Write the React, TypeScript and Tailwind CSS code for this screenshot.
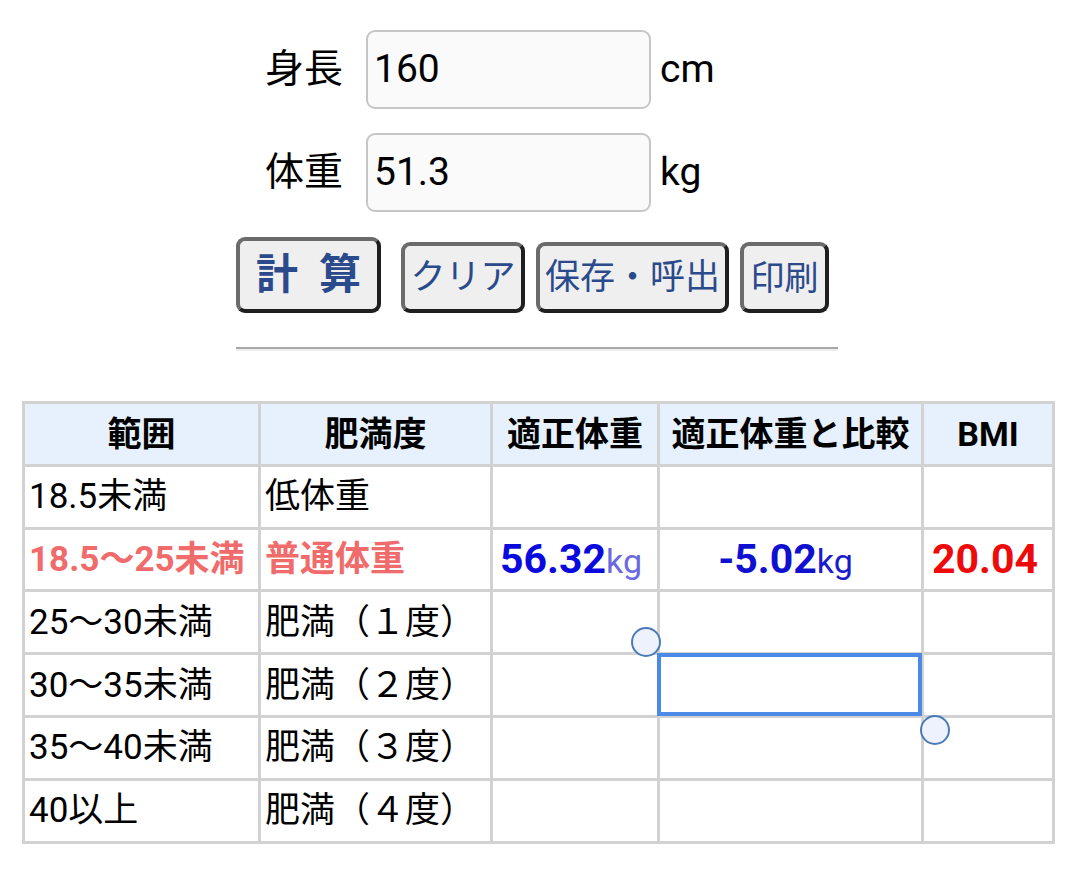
import React from "react";

const font = { fontFamily: "Roboto, 'Noto Sans CJK JP', sans-serif" };

function Btn({ children, className }: { children: React.ReactNode; className: string }) {
  return (
    <button
      className={
        "rounded-[9px] border-[4px] border-t-[#6b6b6b] border-l-[#6b6b6b] border-r-[#1f1f1f] border-b-[#1f1f1f] bg-[#efefef] text-[#2a4a8c] flex items-center justify-center leading-none whitespace-nowrap p-0 " +
        className
      }
    >
      {children}
    </button>
  );
}

const rows = [
  ["18.5未満", "低体重"],
  ["18.5〜25未満", "普通体重"],
  ["25〜30未満", "肥満（１度）"],
  ["30〜35未満", "肥満（２度）"],
  ["35〜40未満", "肥満（３度）"],
  ["40以上", "肥満（４度）"],
];

export default function App() {
  return (
    <div className="w-[1080px] h-[890px] bg-white relative text-black" style={font}>
      <div className="pt-[30px] pl-[265px] flex flex-col gap-[24px]">
        <div className="flex items-center">
          <span className="text-[39px] w-[101px] leading-none">身長</span>
          <div className="w-[285px] h-[79px] rounded-[9px] border-2 border-[#c6c6c6] bg-[#fafafa] flex items-center pl-[6px] text-[39px]">
            160
          </div>
          <span className="text-[39px] ml-[9px]">cm</span>
        </div>
        <div className="flex items-center">
          <span className="text-[39px] w-[101px] leading-none">体重</span>
          <div className="w-[285px] h-[79px] rounded-[9px] border-2 border-[#c6c6c6] bg-[#fafafa] flex items-center pl-[6px] text-[39px]">
            51.3
          </div>
          <span className="text-[39px] ml-[9px]">kg</span>
        </div>
      </div>
      <div className="flex items-end pl-[236px] mt-[25px] h-[76px]">
        <Btn className="w-[145px] h-[76px] text-[42px] font-bold tracking-[21px] pl-[21px]">計算</Btn>
        <Btn className="w-[124px] h-[71px] text-[35px] ml-[20px]">クリア</Btn>
        <Btn className="w-[193px] h-[71px] text-[35px] ml-[11px]">保存・呼出</Btn>
        <Btn className="w-[89px] h-[71px] text-[34px] ml-[11px]">印刷</Btn>
      </div>
      <div className="ml-[236px] mt-[34px] w-[602px] h-[4px] border-t-2 border-t-[#a8a8a8] border-b-2 border-b-[#eeeeee]" />
      <table className="ml-[22px] mt-[50px] border-collapse text-[35px] table-fixed leading-none">
        <colgroup>
          <col className="w-[236px]" />
          <col className="w-[232px]" />
          <col className="w-[167px]" />
          <col className="w-[264px]" />
          <col className="w-[131px]" />
        </colgroup>
        <thead>
          <tr className="bg-[#e6f1fd] h-[62.8px]">
            {["範囲", "肥満度", "適正体重", "適正体重と比較", "BMI"].map((h) => (
              <th key={h} className="border-[3px] border-[#d2d2d2] font-bold text-center p-0 whitespace-nowrap text-[34px]">
                {h}
              </th>
            ))}
          </tr>
        </thead>
        <tbody>
          {rows.map((r, i) => {
            const hi = i === 1;
            const c = hi ? "text-[#f06b6b] font-bold" : "";
            return (
              <tr key={i} className="h-[62.8px]">
                <td className={"border-[3px] border-[#d2d2d2] pl-[4px] p-0 whitespace-nowrap overflow-hidden " + c}>{r[0]}</td>
                <td className={"border-[3px] border-[#d2d2d2] pl-[4px] p-0 whitespace-nowrap overflow-hidden " + c}>{r[1]}</td>
                <td className="border-[3px] border-[#d2d2d2] text-center p-0 pr-[8px] whitespace-nowrap">
                  {hi && (
                    <>
                      <span className="text-[#0a0adf] font-bold text-[41px]">56.32</span>
                      <span className="text-[#6a6ae0] text-[34px]">kg</span>
                    </>
                  )}
                </td>
                <td className="border-[3px] border-[#d2d2d2] text-center p-0 pr-[10px] whitespace-nowrap">
                  {hi && (
                    <>
                      <span className="text-[#1010d0] font-bold text-[41px]">-5.02</span>
                      <span className="text-[#1a1ad0] text-[34px]">kg</span>
                    </>
                  )}
                </td>
                <td className="border-[3px] border-[#d2d2d2] text-center p-0 pr-[6px] whitespace-nowrap">
                  {hi && <span className="text-[#ee0a0a] font-bold text-[41px]">20.04</span>}
                </td>
              </tr>
            );
          })}
        </tbody>
      </table>
      <div className="absolute left-[657px] top-[653px] w-[265px] h-[63px] border-[4px] border-[#4b8ae6]" />
      <div className="absolute left-[631px] top-[627px] w-[30px] h-[30px] rounded-full border-2 border-[#4a7ab8] bg-[#eef2fc]" />
      <div className="absolute left-[920px] top-[715px] w-[30px] h-[30px] rounded-full border-2 border-[#4a7ab8] bg-[#eef2fc]" />
    </div>
  );
}
